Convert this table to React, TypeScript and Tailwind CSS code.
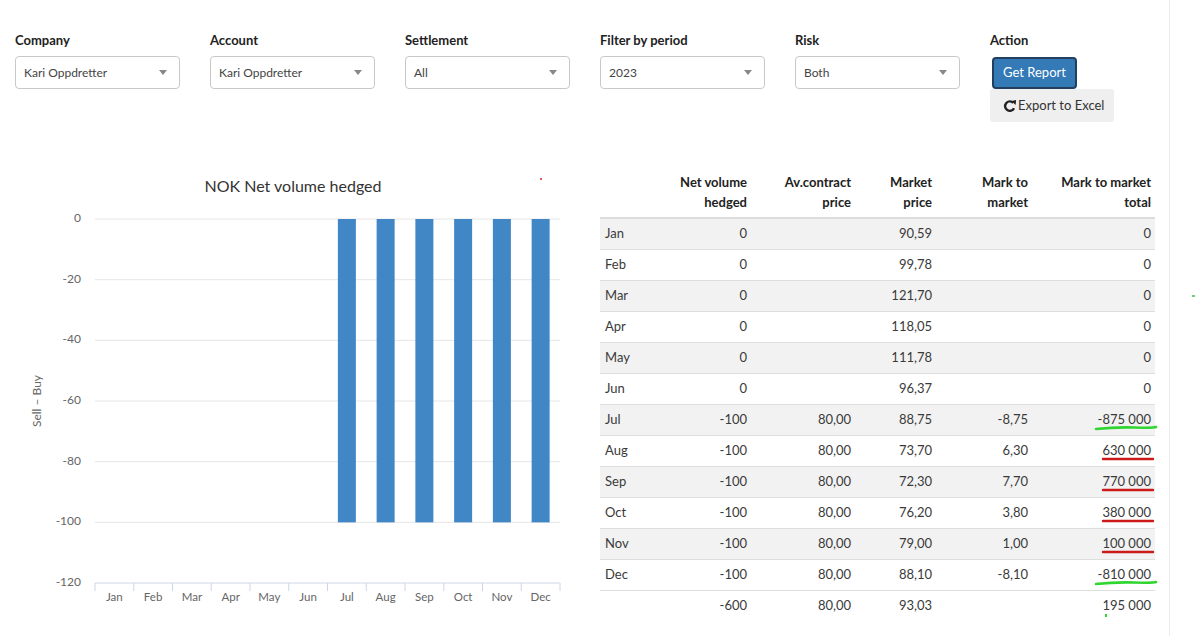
import React from "react";

const filters = [
  { label: "Company", value: "Kari Oppdretter" },
  { label: "Account", value: "Kari Oppdretter" },
  { label: "Settlement", value: "All" },
  { label: "Filter by period", value: "2023" },
  { label: "Risk", value: "Both" },
];

const months = ["Jan", "Feb", "Mar", "Apr", "May", "Jun", "Jul", "Aug", "Sep", "Oct", "Nov", "Dec"];

type Row = {
  m: string;
  vol: string;
  av: string;
  price: string;
  mtm: string;
  total: string;
  mark?: "green" | "red";
};

const rows: Row[] = [
  { m: "Jan", vol: "0", av: "", price: "90,59", mtm: "", total: "0" },
  { m: "Feb", vol: "0", av: "", price: "99,78", mtm: "", total: "0" },
  { m: "Mar", vol: "0", av: "", price: "121,70", mtm: "", total: "0" },
  { m: "Apr", vol: "0", av: "", price: "118,05", mtm: "", total: "0" },
  { m: "May", vol: "0", av: "", price: "111,78", mtm: "", total: "0" },
  { m: "Jun", vol: "0", av: "", price: "96,37", mtm: "", total: "0" },
  { m: "Jul", vol: "-100", av: "80,00", price: "88,75", mtm: "-8,75", total: "-875 000", mark: "green" },
  { m: "Aug", vol: "-100", av: "80,00", price: "73,70", mtm: "6,30", total: "630 000", mark: "red" },
  { m: "Sep", vol: "-100", av: "80,00", price: "72,30", mtm: "7,70", total: "770 000", mark: "red" },
  { m: "Oct", vol: "-100", av: "80,00", price: "76,20", mtm: "3,80", total: "380 000", mark: "red" },
  { m: "Nov", vol: "-100", av: "80,00", price: "79,00", mtm: "1,00", total: "100 000", mark: "red" },
  { m: "Dec", vol: "-100", av: "80,00", price: "88,10", mtm: "-8,10", total: "-810 000", mark: "green" },
];

function Select({ value }: { value: string }) {
  return (
    <div className="h-[33px] w-[165px] border border-[#c8c8c8] rounded-[4px] flex items-center justify-between pl-[8px] pr-[12px] text-[12px] text-[#444] bg-white">
      <span>{value}</span>
      <svg width="8" height="6" viewBox="0 0 8 6">
        <path d="M0 0 L8 0 L4 5 Z" fill="#888" />
      </svg>
    </div>
  );
}

function Chart() {
  const left = 95;
  const step = 38.75;
  const y = (v: number) => 58 + (-v / 20) * 60.67;
  return (
    <svg width="580" height="470" className="shrink-0 mt-[1px]">
      <text x="293" y="27" textAnchor="middle" dominantBaseline="middle" fontSize="16" fill="#333">
        NOK Net volume hedged
      </text>
      <circle cx="541" cy="18" r="1" fill="#d22" />
      {[0, -20, -40, -60, -80, -100].map((v) => (
        <line key={v} x1={left} x2="560" y1={y(v)} y2={y(v)} stroke="#e6e6e6" />
      ))}
      {[0, -20, -40, -60, -80, -100, -120].map((v) => (
        <text key={v} x="81" y={y(v)} textAnchor="end" dominantBaseline="middle" fontSize="12" fill="#666">
          {v === 0 ? "0" : `-${-v}`}
        </text>
      ))}
      <text
        x="38"
        y="240"
        transform="rotate(-90 38 240)"
        textAnchor="middle"
        dominantBaseline="middle"
        fontSize="12"
        fill="#666"
      >
        Sell – Buy
      </text>
      <line x1={left} x2="560" y1="422" y2="422" stroke="#ccd6eb" />
      {Array.from({ length: 13 }).map((_, i) => (
        <line key={i} x1={left + i * step} x2={left + i * step} y1="422" y2="430" stroke="#ccd6eb" />
      ))}
      {months.map((m, i) => (
        <text key={m} x={left + (i + 0.5) * step} y="437" textAnchor="middle" dominantBaseline="middle" fontSize="11.5" fill="#666">
          {m}
        </text>
      ))}
      {months.slice(6).map((m, i) => (
        <rect key={m} x={left + (i + 6.5) * step - 9} y={y(0)} width="18" height={y(-100) - y(0)} fill="#4187c6" />
      ))}
    </svg>
  );
}

function Mark({ color, children }: { color: "green" | "red"; children: React.ReactNode }) {
  const stroke = color === "green" ? "#2fd62f" : "#cc1a1a";
  return (
    <span className="relative inline-block">
      {children}
      <svg className="absolute left-[-4px] top-[14px]" width="64" height="8" viewBox="0 0 64 8">
        {color === "green" ? (
          <path d="M2 5 Q 20 3 40 3.5 T 62 3" stroke={stroke} strokeWidth="2.6" fill="none" strokeLinecap="round" />
        ) : (
          <path d="M5 4 L55 4" stroke={stroke} strokeWidth="2.4" fill="none" strokeLinecap="round" />
        )}
      </svg>
    </span>
  );
}

export default function App() {
  return (
    <div className="relative w-[1195px] h-[636px] bg-white overflow-hidden font-['Lato',sans-serif] text-[#333]">
      <div className="w-[1170px] h-full border-r border-[#ececec]">
        <div className="h-[160px] pt-[31px] pl-[15px] flex gap-[30px]">
          {filters.map((f) => (
            <div key={f.label} className="flex flex-col">
              <div className="text-[13px] font-bold leading-[18px] mb-[7px] text-[#222]">{f.label}</div>
              <Select value={f.value} />
            </div>
          ))}
          <div className="flex flex-col">
            <div className="text-[13px] font-bold leading-[18px] mb-[7px] text-[#222]">Action</div>
            <button className="ml-[2px] mt-[1px] h-[32px] w-[85px] bg-[#337ab7] border-2 border-[#22405e] rounded-[4px] text-white text-[13px]">
              Get Report
            </button>
            <button className="h-[33px] w-[124px] bg-[#efefef] rounded-[3px] text-[13px] text-[#333] flex items-center pl-[13px] gap-[1px]">
              <svg width="14" height="14" viewBox="0 0 16 16">
                <path d="M12.6 10.6 A5.4 5.4 0 1 1 11.6 4.3" stroke="#222" strokeWidth="2.8" fill="none" />
                <path d="M9.6 2.4 L15 1.2 L14.4 6.8 Z" fill="#222" />
              </svg>
              Export to Excel
            </button>
          </div>
        </div>
        <div className="flex">
          <Chart />
          <div className="ml-[20px] mt-[9px] w-[555px]">
            <table className="w-full table-fixed border-collapse text-[13px] text-[#3a3a3a]">
              <colgroup>
                <col className="w-[60px]" />
                <col className="w-[92px]" />
                <col className="w-[104px]" />
                <col className="w-[81px]" />
                <col className="w-[96px]" />
                <col className="w-[122px]" />
              </colgroup>
              <thead>
                <tr className="border-b-2 border-[#dcdcdc]">
                  <th className="px-[5px]" />
                  <th className="px-[5px] pt-[3px] pb-[5px] text-right font-bold leading-[20px] text-[#222]">Net volume hedged</th>
                  <th className="px-[5px] pt-[3px] pb-[5px] text-right font-bold leading-[20px] text-[#222]">
                    Av.contract
                    <br />
                    price
                  </th>
                  <th className="px-[5px] pt-[3px] pb-[5px] text-right font-bold leading-[20px] text-[#222]">
                    Market
                    <br />
                    price
                  </th>
                  <th className="px-[5px] pt-[3px] pb-[5px] text-right font-bold leading-[20px] text-[#222]">
                    Mark to
                    <br />
                    market
                  </th>
                  <th className="px-[4px] pt-[3px] pb-[5px] text-right font-bold leading-[20px] text-[#222]">
                    Mark to market
                    <br />
                    total
                  </th>
                </tr>
              </thead>
              <tbody>
                {rows.map((r, i) => (
                  <tr key={r.m} className={`h-[31px] border-b border-[#dedede] ${i % 2 === 0 ? "bg-[#f2f2f2]" : "bg-white"}`}>
                    <td className="px-[5px]">{r.m}</td>
                    <td className="px-[5px] text-right">{r.vol}</td>
                    <td className="px-[5px] text-right">{r.av}</td>
                    <td className="px-[5px] text-right">{r.price}</td>
                    <td className="px-[5px] text-right">{r.mtm}</td>
                    <td className="px-[4px] text-right">
                      {r.mark ? <Mark color={r.mark}>{r.total}</Mark> : r.total}
                    </td>
                  </tr>
                ))}
                <tr className="h-[31px]">
                  <td className="px-[5px]" />
                  <td className="px-[5px] text-right">-600</td>
                  <td className="px-[5px] text-right">80,00</td>
                  <td className="px-[5px] text-right">93,03</td>
                  <td className="px-[5px] text-right" />
                  <td className="px-[4px] text-right">
                    <span className="relative inline-block">
                      195 000
                      <span className="absolute left-[3px] top-[18px] w-[2px] h-[3px] bg-[#2fd62f]" />
                    </span>
                  </td>
                </tr>
              </tbody>
            </table>
          </div>
        </div>
      </div>
      <span className="absolute left-[1192px] top-[295px] w-[3px] h-[2px] bg-[#6ad66a]" />
    </div>
  );
}
